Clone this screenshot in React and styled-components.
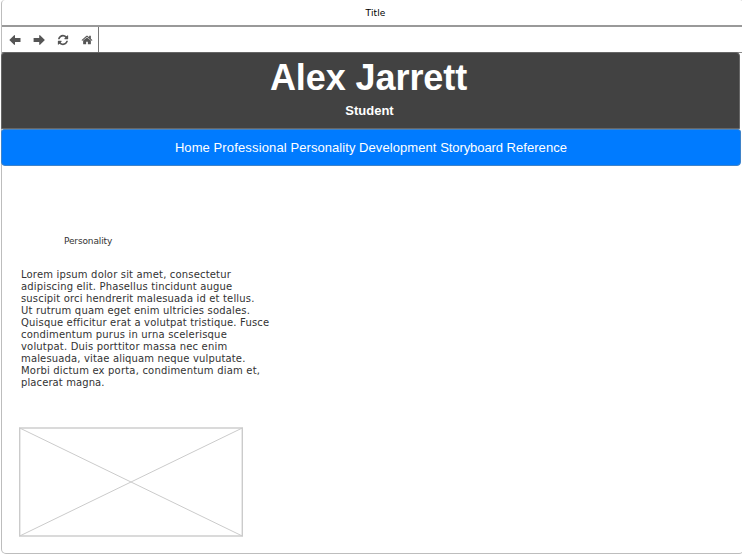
import React from "react";
import styled, { createGlobalStyle } from "styled-components";

const GlobalStyle = createGlobalStyle`
  * { box-sizing: border-box; }
  body { margin: 0; background: #fff; overflow: hidden; }
`;

const Frame = styled.div`
  display: flex;
  flex-direction: column;
  width: 743px;
  height: 554px;
  margin-left: 1px;
  border: solid #bdbdbd;
  border-width: 0 1px 1.5px 1px;
  border-radius: 4px 4px 5px 5px;
  background: #fff;
`;

const TitleBar = styled.div`
  height: 27px;
  padding-left: 6px;
  border-bottom: 2px solid #999;
  font: 9px/26px "DejaVu Sans", sans-serif;
  letter-spacing: 0.1px;
  text-align: center;
  color: #000;
`;

const Toolbar = styled.div`
  display: flex;
  height: 26px;
  border-bottom: 1px solid #888;
`;

const Controls = styled.div`
  display: flex;
  align-items: center;
  gap: 12px;
  width: 97px;
  padding: 1px 0 0 7px;
  border-right: 1px solid #777;
`;

const Address = styled.div`
  flex: 1;
`;

const Icon = styled.svg`
  display: block;
  flex: none;
  width: 12px;
  height: 12px;
  fill: #555;
`;

const Header = styled.header`
  display: flex;
  flex-direction: column;
  align-items: center;
  width: 739px;
  height: 77px;
  margin: -1px 0 0 -1px;
  border: 1px solid #666;
  border-radius: 4px 4px 0 0;
  background: #424242;
  color: #fff;
  font-family: "Liberation Sans", Arial, sans-serif;
`;

const Name = styled.h1`
  margin: 4px 4px 0 0;
  font-size: 36px;
  line-height: 42px;
  letter-spacing: -0.08px;
`;

const Role = styled.p`
  margin: 4px 2px 0 0;
  font-size: 13px;
  font-weight: bold;
  line-height: 16px;
`;

const Nav = styled.nav`
  display: flex;
  justify-content: center;
  gap: 3.6px;
  width: 740px;
  height: 37px;
  margin-left: -1px;
  border: 1px solid #3f83c9;
  border-radius: 3px 3px 4px 4px;
  background: #007bff;
`;

const NavLink = styled.span`
  color: #fff;
  font: 13px/36px "Liberation Sans", Arial, sans-serif;
  letter-spacing: ${(p) => p.$spacing}px;
`;

const Content = styled.main`
  display: flex;
  flex-direction: column;
  align-items: flex-start;
  padding: 69px 0 0 19px;
  color: #333;
  font-family: "DejaVu Sans", sans-serif;
`;

const Heading = styled.h2`
  margin: 0 0 0 43px;
  font-size: 9px;
  font-weight: normal;
  line-height: 12px;
  letter-spacing: -0.14px;
`;

const Paragraph = styled.p`
  margin: 22px 0 0;
  font-size: 10px;
  line-height: 12px;
`;

const Line = styled.span`
  display: block;
  white-space: nowrap;
  letter-spacing: ${(p) => p.$spacing}px;
`;

const Placeholder = styled.svg`
  display: block;
  width: 225px;
  height: 110px;
  margin: 38px 0 0 -2px;
  fill: none;
  stroke: #cbcbcb;
`;

const links = [
  ["Home", 0.06],
  ["Professional", 0.16],
  ["Personality", 0.06],
  ["Development", 0.08],
  ["Storyboard", -0.08],
  ["Reference", 0.06],
];

const lines = [
  ["Lorem ipsum dolor sit amet, consectetur", 0.17],
  ["adipiscing elit. Phasellus tincidunt augue", 0.16],
  ["suscipit orci hendrerit malesuada id et tellus.", 0.16],
  ["Ut rutrum quam eget enim ultricies sodales.", 0.17],
  ["Quisque efficitur erat a volutpat tristique. Fusce", 0.17],
  ["condimentum purus in urna scelerisque", 0.19],
  ["volutpat. Duis porttitor massa nec enim", 0.18],
  ["malesuada, vitae aliquam neque vulputate.", 0.15],
  ["Morbi dictum ex porta, condimentum diam et,", 0.19],
  ["placerat magna.", 0.1],
];

export default function App() {
  return (
    <>
      <GlobalStyle />
      <Frame>
        <TitleBar>Title</TitleBar>
        <Toolbar>
          <Controls>
            <Icon viewBox="0 0 12 12">
              <path d="M0.3 6 L5.4 1 L6 1.5 V4 H11.5 V8 H6 V10.5 L5.4 11Z" />
            </Icon>
            <Icon viewBox="0 0 12 12">
              <path d="M11.9 6 L6.8 1 L6.2 1.5 V4 H0.6 V8 H6.2 V10.5 L6.8 11Z" />
            </Icon>
            <Icon viewBox="-128 -128 1792 1792">
              <path d="M1511 928q0 5-1 7-64 268-268 434.5t-478 166.5q-146 0-282.5-55t-243.5-157l-129 129q-19 19-45 19t-45-19-19-45v-448q0-26 19-45t45-19h448q26 0 45 19t19 45-19 45l-137 137q71 66 161 102t187 36q134 0 250-65t186-179q11-17 53-117 8-23 30-23h192q13 0 22.5 9.5t9.5 22.5zm25-800v448q0 26-19 45t-45 19h-448q-26 0-45-19t-19-45 19-45l138-138q-148-137-349-137-134 0-250 65t-186 179q-11 17-53 117-8 23-30 23h-199q-13 0-22.5-9.5t-9.5-22.5v-7q65-268 270-434.5t480-166.5q146 0 284 55.5t245 156.5l130-129q19-19 45-19t45 19 19 45z" />
            </Icon>
            <Icon viewBox="0 0 1792 1792">
              <path d="M1472 992v480q0 26-19 45t-45 19h-384v-384h-256v384h-384q-26 0-45-19t-19-45v-480q0-1 .5-3t.5-3l575-474 575 474q1 2 1 6zm223-69l-62 74q-8 9-21 11h-3q-13 0-21-7l-692-577-692 577q-12 8-24 7-13-2-21-11l-62-74q-8-10-7-23.5t11-21.5l719-599q32-26 76-26t76 26l244 204v-195q0-14 9-23t23-9h192q14 0 23 9t9 23v408l219 182q10 8 11 21.5t-7 23.5z" />
            </Icon>
          </Controls>
          <Address />
        </Toolbar>
        <Header>
          <Name>Alex Jarrett</Name>
          <Role>Student</Role>
        </Header>
        <Nav>
          {links.map(([label, spacing]) => (
            <NavLink key={label} $spacing={spacing}>{label}</NavLink>
          ))}
        </Nav>
        <Content>
          <Heading>Personality</Heading>
          <Paragraph>
            {lines.map(([text, spacing]) => (
              <Line key={text} $spacing={spacing}>{text}</Line>
            ))}
          </Paragraph>
          <Placeholder viewBox="0 0 225 110">
            <rect x="0.7" y="1" width="222.6" height="108" strokeWidth="1.4" />
            <path d="M0.7 1 L223.3 109 M223.3 1 L0.7 109" />
          </Placeholder>
        </Content>
      </Frame>
    </>
  );
}
